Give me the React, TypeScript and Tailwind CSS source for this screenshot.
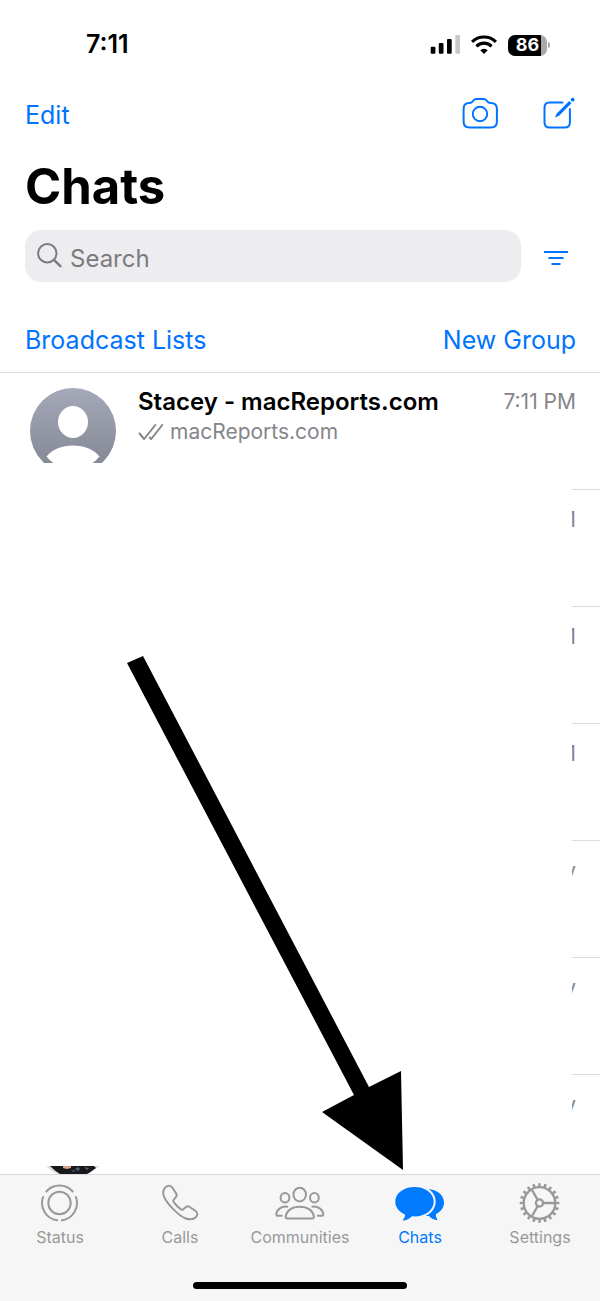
import type { ReactNode } from "react";

const SignalIcon = () => (
  <svg width="30" height="20" viewBox="0 0 30 20" aria-hidden="true">
    <rect x="0.7" y="11.7" width="4.7" height="7" rx="1" />
    <rect x="8.8" y="8" width="4.7" height="10.7" rx="1" />
    <rect x="17" y="4" width="4.7" height="14.7" rx="1" />
    <rect x="25.3" y="0" width="4.7" height="18.7" rx="1" fill="#c8c8c8" />
  </svg>
);

const WifiIcon = () => (
  <svg width="26" height="20" viewBox="0 0 26 20" fill="none" stroke="#000" strokeWidth="3.1" aria-hidden="true">
    <path d="M1.1 6.9a16.8 16.8 0 0 1 23.8 0" />
    <path d="M5.4 11.3a10.7 10.7 0 0 1 15.2 0" />
    <path d="M9.2 15.2a5.4 5.4 0 0 1 7.6 0L13 18.9Z" fill="#000" stroke="none" />
  </svg>
);

const CameraIcon = () => (
  <svg width="40" height="40" viewBox="0 0 40 40" fill="none" stroke="currentColor" strokeWidth="2" strokeLinejoin="round" aria-hidden="true">
    <path d="M9.2 8c2 0 2.700-.4 3.400-1.500C13.700 4.700 14.600 4.100 16.400 4.100h7.200c1.800 0 2.700.6 3.800 2.400C28.100 7.600 28.800 8 30.800 8c4 0 6.100 2 6.100 6v12.600c0 4-2 6-6 6H9.600c-4 0-6-2-6-6V14c0-4 1.600-6 5.600-6Z" />
    <circle cx="20" cy="19" r="7.200" />
  </svg>
);

const ComposeIcon = () => (
  <svg width="36" height="40" viewBox="0 0 36 40" fill="none" stroke="currentColor" strokeWidth="2" strokeLinecap="round" aria-hidden="true">
    <path d="M22.500 7.500H9.600C6.200 7.500 4.500 9.200 4.500 12.600v14.800c0 3.400 1.700 5.100 5.100 5.100h15.200c3.400 0 5.100-1.700 5.100-5.100V14" />
    <path d="M29.200 6 17 18.200l-1.800 3.500c-.3.600 0 .9.600.6l3.500-1.800L31.500 8.300Z" fill="currentColor" stroke="none" />
    <circle cx="32.700" cy="4.700" r="1.900" fill="currentColor" stroke="none" />
  </svg>
);

const SearchIcon = () => (
  <svg width="26" height="26" viewBox="0 0 26 26" fill="none" stroke="currentColor" strokeLinecap="round" aria-hidden="true">
    <circle cx="10.300" cy="10.300" r="9.200" strokeWidth="2" />
    <path d="m17.200 17.200 6.200 6" strokeWidth="2.500" />
  </svg>
);

const FilterIcon = () => (
  <svg width="24" height="16" viewBox="0 0 24 16" stroke="currentColor" strokeWidth="2" aria-hidden="true">
    <path d="M0 2h24M4.500 8h15M7.500 14h9" />
  </svg>
);

const Avatar = () => (
  <svg width="86" height="75" viewBox="0 0 86 75" aria-hidden="true">
    <defs>
      <linearGradient id="avatar" x1="0" y1="0" x2="0" y2="1">
        <stop offset="0" stopColor="#a5a9b8" />
        <stop offset="1" stopColor="#828691" />
      </linearGradient>
    </defs>
    <circle cx="43" cy="43" r="43" fill="url(#avatar)" />
    <ellipse cx="43" cy="34" rx="15" ry="16" fill="#fff" />
    <path d="M16.500 68.500C23 61 32 57.500 43 57.500s20 3.500 26.500 11q-3 4-8.500 7.500H25q-5.500-3.500-8.500-7.500Z" fill="#fff" />
  </svg>
);

const ReadTicks = () => (
  <svg width="26" height="18" viewBox="0 0 26 18" fill="none" stroke="currentColor" strokeWidth="2" strokeLinecap="round" strokeLinejoin="round" aria-hidden="true">
    <path d="m1.500 10.500 4.600 5.500L17.300 2M11.800 14.500l1.400 1.500L24.300 2" />
  </svg>
);

// bottom sliver of the next contact's photo
const PhotoEdge = () => (
  <svg width="54" height="8" viewBox="0 0 54 8" aria-hidden="true">
    <path d="M0 0h54q-8 5-14 8H12Q5 5 0 0Z" fill="#dcdcde" />
    <path d="M4 0h44l2 2q-5 4-9 6H14Q9 5 4 0Z" fill="#17181b" />
    <path d="M17 0h8v2l-4 1-4-1Z" fill="#e0a58c" />
    <path d="M29 3l3-2 2 2-2 2ZM38 1l5 1-2 2ZM25 5l3-1 1 2Z" fill="#5b5f69" />
  </svg>
);

const StatusIcon = () => (
  <svg width="40" height="40" viewBox="0 0 40 40" fill="none" stroke="currentColor" strokeWidth="2" strokeLinecap="round" aria-hidden="true">
    <circle cx="19.500" cy="20" r="11.200" />
    <path d="M6.300 8.500a17.500 17.500 0 0 1 26.400 0M35.900 14a17.500 17.500 0 0 1-14 23.300M17.100 37.300A17.500 17.500 0 0 1 3.100 14" />
  </svg>
);

const CallsIcon = () => (
  <svg width="40" height="40" viewBox="0 0 40 40" fill="none" stroke="currentColor" strokeWidth="2" strokeLinejoin="round" aria-hidden="true">
    <path d="M5.500 4.200C7.500 2.200 10.300 2 12 4.300l4 5.800c1.100 1.600.9 2.900-.3 4.200l-1.800 2c-.8.900-.8 1.900 0 3 2 2.700 4.100 4.800 6.700 6.800 1.100.8 2.100.8 3 0l2-1.800c1.300-1.200 2.700-1.300 4.200-.3l5.800 4c2.200 1.600 2.200 4.300.2 6.300-2.200 2.200-5.800 2.700-10.600.9C19 32.900 7.100 21 4.200 14.200c-1.700-4-.9-7.800 1.300-10Z" />
  </svg>
);

const CommunitiesIcon = () => (
  <svg width="50" height="40" viewBox="0 0 50 40" fill="none" stroke="currentColor" strokeWidth="2" strokeLinecap="round" strokeLinejoin="round" aria-hidden="true">
    <ellipse cx="24.700" cy="11.600" rx="6.300" ry="6.800" />
    <ellipse cx="10" cy="14.700" rx="4.400" ry="4.800" />
    <ellipse cx="39.400" cy="14.700" rx="4.400" ry="4.800" />
    <path d="M10.700 33.500c.8-6 6.300-9.800 14-9.800s13.300 3.800 14.200 9.800c.1 1.400-.4 1.900-1.800 1.900H12.500c-1.400 0-1.900-.5-1.800-1.900Z" />
    <path d="M12.300 23.700C6 23 1.500 27 1.300 31.500c0 .9.300 1.200 1.200 1.200h4.300M37.300 23.700c6.300-.7 10.800 3.300 11 7.800 0 .9-.3 1.200-1.200 1.200h-4.300" />
  </svg>
);

const ChatsIcon = () => (
  <svg width="50" height="40" viewBox="0 0 50 40" fill="currentColor" aria-hidden="true">
    <path d="M31 6c10.500 0 18 5.700 18 13.600 0 5-2.900 9-7.900 11.500-.6 1.600.2 3.900 1.100 5.100.4.600 0 .9-.7.800-3-.5-5.700-2-7.500-4.100-12 1-21-5-21-13.300S20.500 6 31 6Z" />
    <path d="M19.500 4C30.300 4 38.700 10.300 38.700 18.700S30.300 33.400 19.500 33.400c-.8 0-1.600 0-2.400-.1-2.200 2.200-5.100 3.900-8.300 4.300-.8.100-1.200-.4-.7-1 1.300-1.500 2.200-3.400 1.900-5.100C4.100 28.900.3 24.300.3 18.700.3 10.300 8.700 4 19.500 4Z" stroke="#f6f6f6" strokeWidth="4" paintOrder="stroke" />
  </svg>
);

const SettingsIcon = () => (
  <svg width="42" height="40" viewBox="-20.500 -20 42 40" fill="none" stroke="currentColor" strokeWidth="2" aria-hidden="true">
    <circle r="15.800" strokeWidth="2.300" />
    <circle r="18" strokeWidth="3.600" pathLength="40" strokeDasharray="0.9 1.100" strokeDashoffset="0.450" />
    <circle r="3.600" strokeWidth="2.300" />
    <path d="M3.600 0h12M-1.800-3.100l-6-10.400M-1.800 3.100l-6 10.400" strokeWidth="2.300" />
  </svg>
);

const tabs: { label: string; icon: ReactNode; active?: boolean }[] = [
  { label: "Status", icon: <StatusIcon /> },
  { label: "Calls", icon: <CallsIcon /> },
  { label: "Communities", icon: <CommunitiesIcon /> },
  { label: "Chats", icon: <ChatsIcon />, active: true },
  { label: "Settings", icon: <SettingsIcon /> },
];

// last letters of the times that show beside the blanked out chats
const hiddenChats = ["M", "M", "M", "y", "y", "y"];

const App = () => {
  return (
    <div className="flex min-h-screen flex-col bg-white font-['Inter',sans-serif] text-black">
      <div className="flex h-[90px] items-center justify-between pl-[86px] pr-[50px]">
        <span className="text-[25px] font-semibold">7:11</span>
        <div className="flex items-center gap-[11px]">
          <SignalIcon />
          <WifiIcon />
          <div className="flex items-center gap-px">
            <div className="flex h-[21px] w-[39px] items-center justify-center rounded-[7px] bg-linear-to-r from-black from-85% to-[#a8a8a8] to-85% text-lg font-bold leading-5 text-white">
              86
            </div>
            <div className="h-[6px] w-[2px] rounded-r-full bg-[#a8a8a8]" />
          </div>
        </div>
      </div>

      <header className="border-b border-[#dcdcdd] pb-4 pl-[25px] pr-6">
        <div className="flex h-[50px] items-center justify-between text-[#0074ff]">
          <button className="text-[25px] leading-8">Edit</button>
          <div className="flex gap-10">
            <button aria-label="Camera">
              <CameraIcon />
            </button>
            <button aria-label="New chat">
              <ComposeIcon />
            </button>
          </div>
        </div>
        <h1 className="mt-5 text-[49px] font-bold leading-[54px]">Chats</h1>
        <div className="mt-4 flex items-center">
          <label className="flex h-[52px] flex-1 items-center gap-[7px] rounded-2xl bg-[#ededef] pl-3 text-[#7b7b7f]">
            <SearchIcon />
            <input
              type="text"
              aria-label="Search"
              placeholder="Search"
              className="min-w-0 flex-1 bg-transparent pt-[6px] text-2xl leading-8 outline-none placeholder:text-[#7b7b7f]"
            />
          </label>
          <button aria-label="Filter" className="ml-[23px] mr-2 mt-1 text-[#0074ff]">
            <FilterIcon />
          </button>
        </div>
        <div className="mt-[42px] flex justify-between text-[25px] leading-8 text-[#0074ff]">
          <button>Broadcast Lists</button>
          <button>New Group</button>
        </div>
      </header>

      <main className="relative flex flex-1 flex-col">
        <div className="flex h-[116px] items-start pl-[30px] pr-6 pt-[15px]">
          <Avatar />
          <div className="ml-[22px] flex-1">
            <div className="flex items-center justify-between">
              <h2 className="text-2xl font-semibold leading-[28px]">Stacey - macReports.com</h2>
              <span className="text-[21px] leading-[28px] text-[#85858a]">7:11 PM</span>
            </div>
            <div className="mt-[2px] flex items-center gap-[6px] text-[#85858a]">
              <ReadTicks />
              <span className="text-[21px] leading-[28px]">macReports.com</span>
            </div>
          </div>
        </div>
        {hiddenChats.map((letter, i) => (
          <div
            key={i}
            className="ml-auto flex h-[117px] w-7 justify-end overflow-hidden border-t border-[#dcdcdd] pr-6 pt-4 text-[21px] leading-[28px] text-[#85858a] last-of-type:h-[92px]"
          >
            {letter}
          </div>
        ))}
        <footer className="mt-auto pl-[46px]">
          <PhotoEdge />
        </footer>

        <svg
          className="pointer-events-none absolute left-[127px] top-[283px]"
          width="277"
          height="516"
          viewBox="0 0 277 516"
          aria-hidden="true"
        >
          <path d="M0 7 16 0 242 431 274 415 276 514 195 456 227 439Z" />
        </svg>
      </main>

      <nav className="border-t border-[#d8d8d9] bg-[#f6f6f6] pb-3 pt-2">
        <div className="grid grid-cols-5">
          {tabs.map((tab) => (
            <button
              key={tab.label}
              className={`flex flex-col items-center gap-1 text-base leading-5 ${
                tab.active ? "text-[#007aff]" : "text-[#999999]"
              }`}
            >
              {tab.icon}
              {tab.label}
            </button>
          ))}
        </div>
        <div className="mx-auto mt-[35px] h-[7px] w-[214px] rounded-full bg-black" />
      </nav>
    </div>
  );
};

export default App;
